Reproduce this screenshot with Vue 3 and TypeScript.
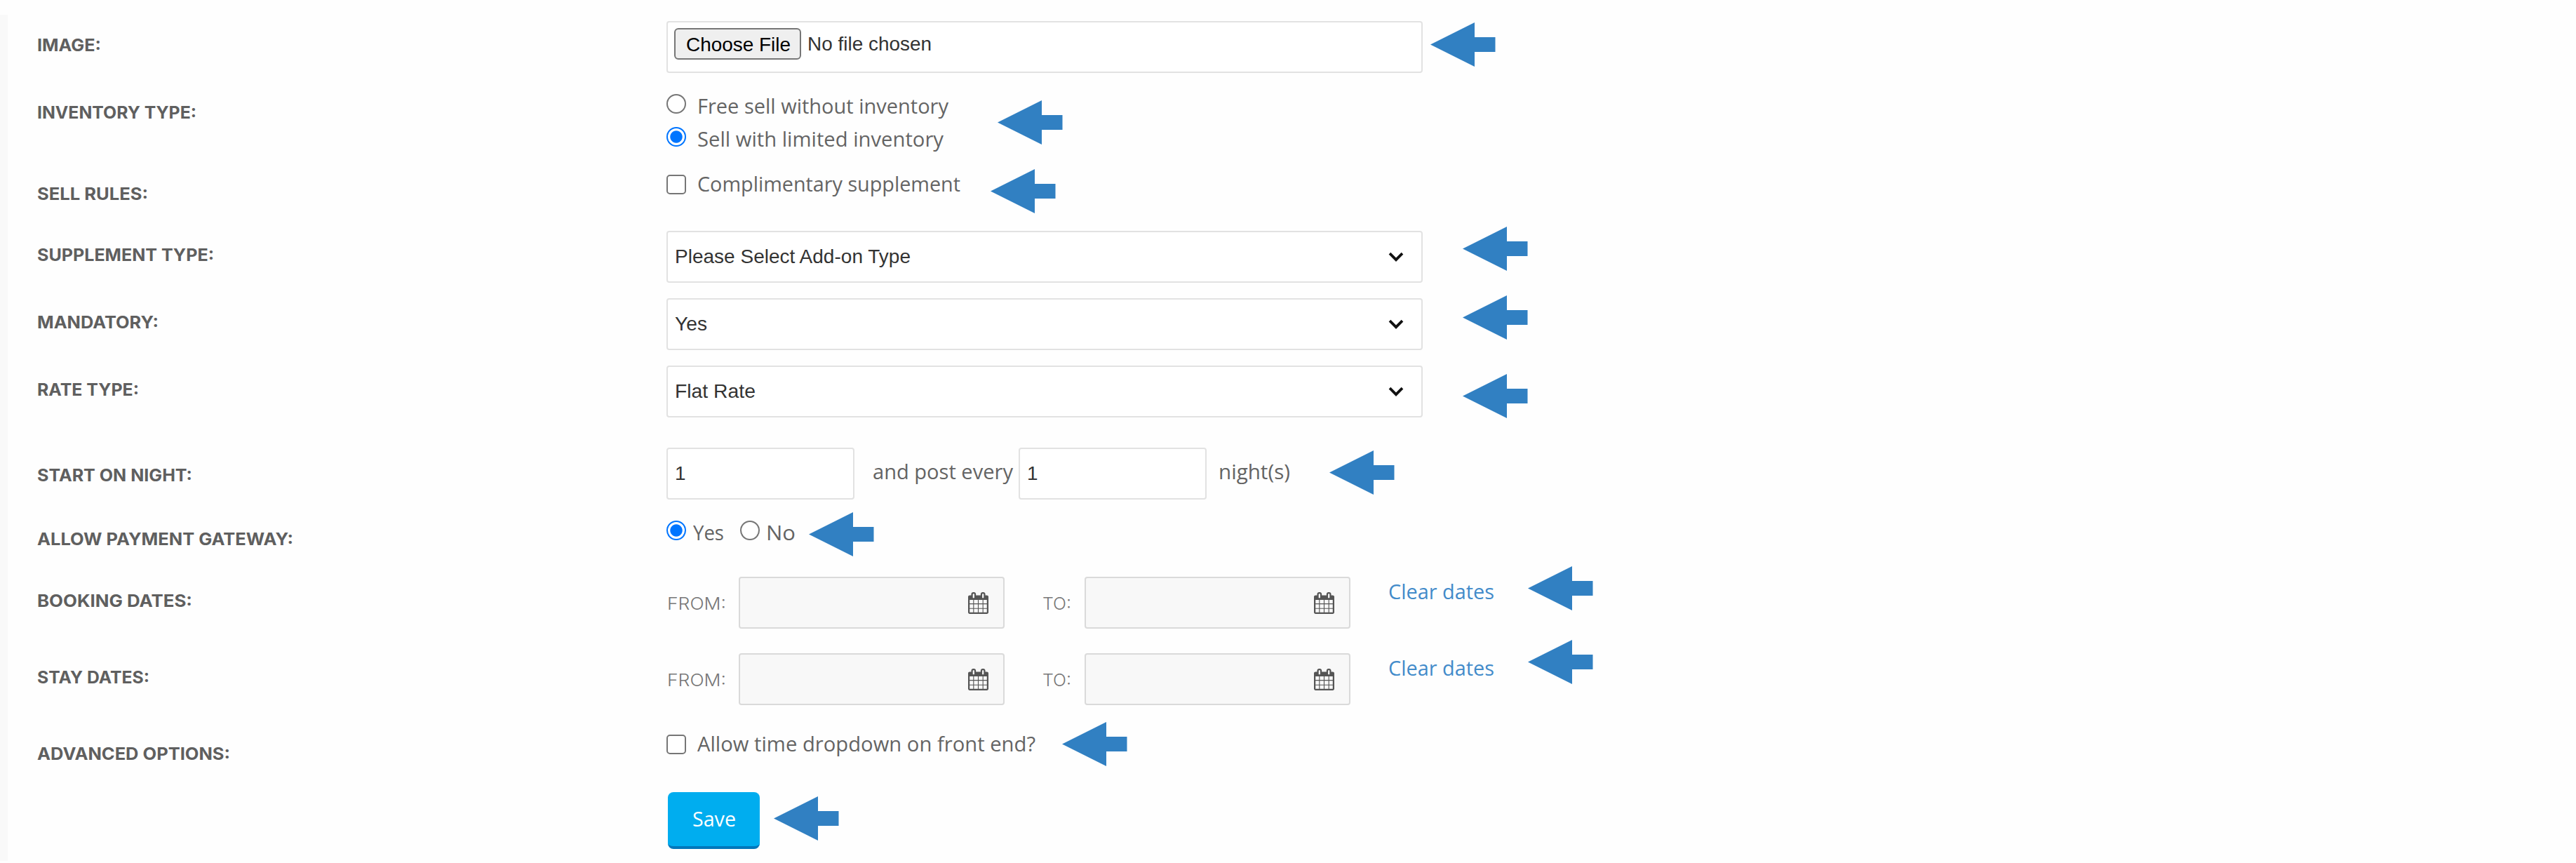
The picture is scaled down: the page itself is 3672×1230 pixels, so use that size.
<script setup lang="ts">
import { h, type Directive, type FunctionalComponent } from 'vue'

// Stretches the text horizontally so that it takes exactly the given width in pixels.
const vFit: Directive<HTMLElement, number> = {
  mounted(el, binding) {
    const natural = el.getBoundingClientRect().width
    el.style.transform = `scaleX(${binding.value / natural})`
    el.style.marginRight = `${binding.value - natural}px`
  },
}

const Arrow: FunctionalComponent = () =>
  h('svg', { class: 'arrow', width: 93, height: 63, viewBox: '0 0 93 63', 'aria-hidden': 'true' }, [
    h('path', { d: 'M0 31.5 63 0V21H92.5V42H63V63Z', fill: '#3180c2' }),
  ])

const calendarPath =
  'M128 1536h288v-288h-288v288zM480 1536h320v-288h-320v288zM128 1184h288v-320h-288v320zM480 1184h320v-320h-320v320zM128 800h288v-288h-288v288zM864 1536h320v-288h-320v288zM480 800h320v-288h-320v288zM1248 1536h288v-288h-288v288zM864 1184h320v-320h-320v320zM512 320v-288q0-13-9.5-22.5t-22.5-9.5h-64q-13 0-22.5 9.5t-9.5 22.5v288q0 13 9.5 22.5t22.5 9.5h64q13 0 22.5-9.5t9.5-22.5zM1248 1184h288v-320h-288v320zM864 800h320v-288h-320v288zM1248 800h288v-288h-288v288zM1280 320v-288q0-13-9.5-22.5t-22.5-9.5h-64q-13 0-22.5 9.5t-9.5 22.5v288q0 13 9.5 22.5t22.5 9.5h64q13 0 22.5-9.5t9.5-22.5zM1664 256v1280q0 52-38 90t-90 38h-1408q-52 0-90-38t-38-90v-1280q0-52 38-90t90-38h128v-96q0-66 47-113t113-47h64q66 0 113 47t47 113v96h384v-96q0-66 47-113t113-47h64q66 0 113 47t47 113v96h128q52 0 90 38t38 90z'

const selects = [
  { key: 'supplement', label: 'SUPPLEMENT TYPE:', labelWidth: 252, value: 'Please Select Add-on Type', width: 336 },
  { key: 'mandatory', label: 'MANDATORY:', labelWidth: 173, value: 'Yes', width: 46 },
  { key: 'rate', label: 'RATE TYPE:', labelWidth: 145, value: 'Flat Rate', width: 115 },
]

const dateRows = [
  { key: 'booking', label: 'BOOKING DATES:', labelWidth: 221 },
  { key: 'stay', label: 'STAY DATES:', labelWidth: 160 },
]
</script>

<template>
  <main class="page">
    <aside class="strip"></aside>
    <form class="form">
      <div class="row image">
        <div class="label"><span v-fit="91" class="fit">IMAGE:</span></div>
        <div class="controls">
          <div class="box wide file">
            <button type="button" class="choose"><span v-fit="149" class="fit">Choose File</span></button>
            <span v-fit="177" class="fit filename">No file chosen</span>
          </div>
          <Arrow />
        </div>
      </div>

      <div class="row inventory">
        <div class="label"><span v-fit="227" class="fit">INVENTORY TYPE:</span></div>
        <div class="controls">
          <div class="stack">
            <label class="option">
              <input type="radio" name="inventory" />
              <span v-fit="358" class="fit">Free sell without inventory</span>
            </label>
            <label class="option">
              <input type="radio" name="inventory" checked />
              <span v-fit="351" class="fit">Sell with limited inventory</span>
            </label>
          </div>
          <Arrow />
        </div>
      </div>

      <div class="row rules">
        <div class="label"><span v-fit="158" class="fit">SELL RULES:</span></div>
        <div class="controls">
          <label class="option">
            <input type="checkbox" />
            <span v-fit="375" class="fit">Complimentary supplement</span>
          </label>
          <Arrow />
        </div>
      </div>

      <div v-for="s in selects" :key="s.key" class="row select" :class="s.key">
        <div class="label"><span v-fit="s.labelWidth" class="fit">{{ s.label }}</span></div>
        <div class="controls">
          <div class="box wide dropdown">
            <span v-fit="s.width" class="fit">{{ s.value }}</span>
            <svg class="chevron" width="22" height="14" viewBox="0 0 22 14">
              <path d="M2 2.2 11 11.2 20 2.2" fill="none" stroke="#111" stroke-width="3.8" />
            </svg>
          </div>
          <Arrow />
        </div>
      </div>

      <div class="row nights">
        <div class="label"><span v-fit="221" class="fit">START ON NIGHT:</span></div>
        <div class="controls">
          <input class="box number" type="text" value="1" />
          <span v-fit="200" class="fit text every">and post every</span>
          <input class="box number" type="text" value="1" />
          <span v-fit="102" class="fit text unit">night(s)</span>
          <Arrow />
        </div>
      </div>

      <div class="row gateway">
        <div class="label"><span v-fit="365" class="fit">ALLOW PAYMENT GATEWAY:</span></div>
        <div class="controls">
          <label class="option">
            <input type="radio" name="gateway" checked />
            <span v-fit="44" class="fit">Yes</span>
          </label>
          <label class="option">
            <input type="radio" name="gateway" />
            <span v-fit="42" class="fit">No</span>
          </label>
          <Arrow />
        </div>
      </div>

      <div v-for="d in dateRows" :key="d.key" class="row dates" :class="d.key">
        <div class="label"><span v-fit="d.labelWidth" class="fit">{{ d.label }}</span></div>
        <div class="controls">
          <span class="caption from"><span v-fit="84" class="fit">FROM:</span></span>
          <div class="box date">
            <svg class="calendar" width="29" height="31" viewBox="0 -128 1664 1792" preserveAspectRatio="none">
              <path :d="calendarPath" fill="#555" />
            </svg>
          </div>
          <span class="caption to"><span v-fit="41" class="fit">TO:</span></span>
          <div class="box date">
            <svg class="calendar" width="29" height="31" viewBox="0 -128 1664 1792" preserveAspectRatio="none">
              <path :d="calendarPath" fill="#555" />
            </svg>
          </div>
          <a class="clear"><span v-fit="151" class="fit">Clear dates</span></a>
          <Arrow />
        </div>
      </div>

      <div class="row advanced">
        <div class="label"><span v-fit="275" class="fit">ADVANCED OPTIONS:</span></div>
        <div class="controls">
          <label class="option">
            <input type="checkbox" />
            <span v-fit="482" class="fit">Allow time dropdown on front end?</span>
          </label>
          <Arrow />
        </div>
      </div>

      <div class="row actions">
        <div class="label"></div>
        <div class="controls">
          <button type="button" class="save"><span v-fit="62" class="fit">Save</span></button>
          <Arrow />
        </div>
      </div>
    </form>
  </main>
</template>

<style>
body {
  background: #fefefe;
}
</style>

<style scoped>
.page {
  display: flex;
  height: 1230px;
  overflow: hidden;
  color: #646464;
  font: 30px/40px 'Open Sans', 'Noto Sans', sans-serif;
}
.page * {
  box-sizing: border-box;
}
.strip {
  width: 11px;
  margin: 21px 0 3px;
  background: #f9f9f9;
}
.form {
  flex: 1;
  padding-left: 41px;
}
.row {
  display: grid;
  grid-template-columns: 898px 1fr;
}
.label {
  color: #5f5f5f;
  font: 700 23.8px/32px Inter, sans-serif;
}
.controls {
  display: flex;
  align-items: flex-start;
}
.fit {
  position: relative;
  top: 1px;
  left: 1px;
  display: inline-block;
  flex: none;
  transform-origin: left center;
  white-space: nowrap;
}
.arrow {
  display: block;
  flex: none;
}
.box {
  flex: none;
  height: 74px;
  border: 2px solid #e2e2e2;
  border-radius: 4px;
  background: #fff;
  color: #333;
  font: 27.8px/40px 'Liberation Sans', Arial, sans-serif;
}
.wide {
  display: flex;
  width: 1078px;
}

.image { height: 125px; }
.image .label { padding-top: 48px; }
.image .controls { padding-top: 30px; }
.image .arrow { margin: 2px 0 0 11px; }
.file { padding: 8px 9px; }
.choose {
  width: 181px;
  height: 45px;
  padding: 0 0 0 14px;
  border: 2px solid #767676;
  border-radius: 6px;
  background: #efefef;
  color: #000;
  font: inherit;
  line-height: 40px;
  text-align: left;
}
.filename { margin: 2px 0 0 8px; }

.option { display: flex; }
.option input {
  appearance: none;
  flex: none;
  width: 28px;
  height: 28px;
  margin: 4px 15px 0 0;
  border: 2px solid #767676;
  background: #fff;
}
.option input[type='radio'] { border-radius: 50%; }
.option input[type='checkbox'] {
  margin-top: 8px;
  border-radius: 5px;
}
.option input:checked {
  border-color: #0075ff;
  background: radial-gradient(circle, #0075ff 8.2px, #fff 9.2px);
}

.inventory { height: 116px; }
.inventory .label { padding-top: 19px; }
.inventory .controls { padding-top: 5px; }
.inventory .option { height: 47px; }
.inventory .arrow { margin: 13px 0 0 71px; }

.rules { height: 88px; }
.rules .label { padding-top: 19px; }
.rules .arrow { margin: 0 0 0 44px; }

.select { height: 96px; }
.select .label { padding-top: 18px; }
.dropdown {
  align-items: center;
  justify-content: space-between;
  padding: 0 25px 0 9px;
}
.dropdown .fit { top: 0; }
.select .arrow { margin-left: 57px; }
.supplement .arrow { margin-top: -6px; }
.mandatory .arrow { margin-top: -4px; }
.rate .arrow { margin-top: 12px; }

.nights { height: 108px; }
.nights .label { padding-top: 44px; }
.nights .controls { padding-top: 21px; }
.number {
  width: 268px;
  margin: 0;
  padding: 0 10px 1px;
}
.text { margin-top: 13px; }
.every { margin-left: 25px; margin-right: 9px; }
.unit { margin-left: 16px; }
.nights .number + .every + .number { margin-left: 9px; }
.nights .arrow { margin: 4px 0 0 57px; }

.gateway { height: 80px; }
.gateway .label { padding-top: 27px; }
.gateway .controls { padding-top: 13px; }
.gateway .option input { margin-right: 9px; }
.gateway .option + .option { margin-left: 24px; }
.gateway .option + .option input { margin-right: 8px; }
.gateway .arrow { margin: -8px 0 0 20px; }

.dates { height: 109px; }
.dates .label { padding-top: 35px; }
.dates .controls { padding-top: 17px; }
.caption {
  margin-top: 22px;
  color: #777;
  font: 300 24px/32px Inter, sans-serif;
}
.from { width: 103px; }
.to { width: 61px; margin-left: 53px; }
.date {
  display: flex;
  align-items: center;
  justify-content: flex-end;
  width: 379px;
  padding-right: 21px;
  border-color: #dadada;
  background: #f8f8f8;
}
.calendar { display: block; margin-bottom: -1px; }
.clear {
  margin: 0 0 0 53px;
  color: #428bca;
}
.dates .arrow { margin: -15px 0 0 49px; }
.stay .arrow { margin-top: -19px; }

.advanced { height: 106px; }
.advanced .label { padding-top: 35px; }
.advanced .controls { padding-top: 16px; }
.advanced .arrow { margin: -10px 0 0 39px; }

.save {
  width: 131px;
  height: 81px;
  margin-left: 2px;
  padding: 0 0 4px;
  border: 0;
  border-bottom: 4px solid #0077bb;
  border-radius: 8px;
  background: #00adef;
  color: #fff;
  font: inherit;
}
.save .fit { left: 0; }
.actions .arrow { margin: 6px 0 0 20px; }
</style>
